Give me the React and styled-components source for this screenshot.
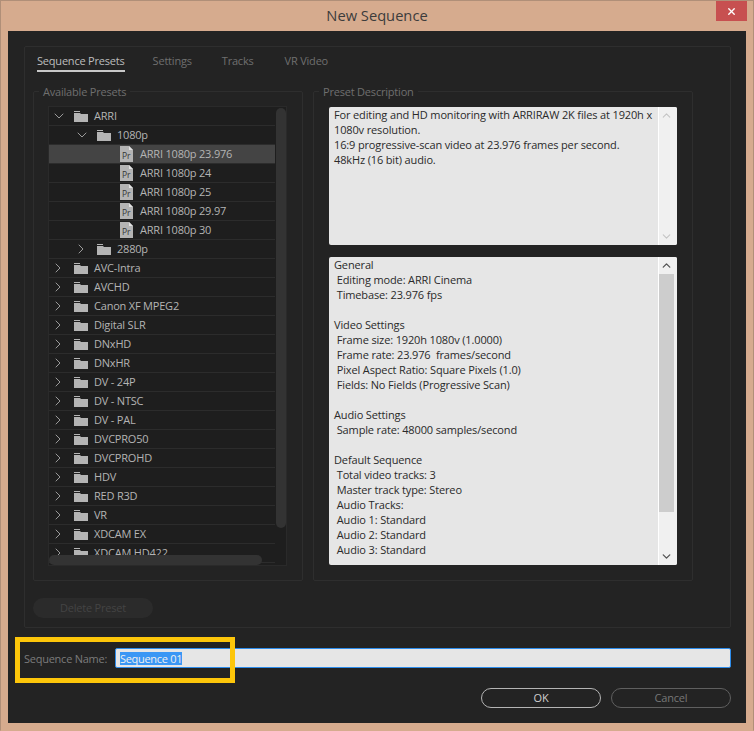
import React from 'react'
import styled, { createGlobalStyle } from 'styled-components'
import { ChevronDown, ChevronRight, ChevronUp, X } from 'lucide-react'

const GlobalStyle = createGlobalStyle`
    html, body {
        margin: 0;
        padding: 0;
        background: #d6ab8e;
    }
`

const uiFont = `"Open Sans", "Liberation Sans", sans-serif`

const presets = [
    { name: 'ARRI', level: 0, open: true },
    { name: '1080p', level: 1, open: true },
    { name: 'ARRI 1080p 23.976', level: 2, file: true, selected: true },
    { name: 'ARRI 1080p 24', level: 2, file: true },
    { name: 'ARRI 1080p 25', level: 2, file: true },
    { name: 'ARRI 1080p 29.97', level: 2, file: true },
    { name: 'ARRI 1080p 30', level: 2, file: true },
    { name: '2880p', level: 1 },
    { name: 'AVC-Intra', level: 0 },
    { name: 'AVCHD', level: 0 },
    { name: 'Canon XF MPEG2', level: 0 },
    { name: 'Digital SLR', level: 0 },
    { name: 'DNxHD', level: 0 },
    { name: 'DNxHR', level: 0 },
    { name: 'DV - 24P', level: 0 },
    { name: 'DV - NTSC', level: 0 },
    { name: 'DV - PAL', level: 0 },
    { name: 'DVCPRO50', level: 0 },
    { name: 'DVCPROHD', level: 0 },
    { name: 'HDV', level: 0 },
    { name: 'RED R3D', level: 0 },
    { name: 'VR', level: 0 },
    { name: 'XDCAM EX', level: 0 },
    { name: 'XDCAM HD422', level: 0 },
]

const generalLines = [
    'General',
    ' Editing mode: ARRI Cinema',
    ' Timebase: 23.976 fps',
    '',
    'Video Settings',
    ' Frame size: 1920h 1080v (1.0000)',
    ' Frame rate: 23.976  frames/second',
    ' Pixel Aspect Ratio: Square Pixels (1.0)',
    ' Fields: No Fields (Progressive Scan)',
    '',
    'Audio Settings',
    ' Sample rate: 48000 samples/second',
    '',
    'Default Sequence',
    ' Total video tracks: 3',
    ' Master track type: Stereo',
    ' Audio Tracks:',
    ' Audio 1: Standard',
    ' Audio 2: Standard',
    ' Audio 3: Standard',
]

const FolderIcon = () => (
    <svg width="14" height="11" viewBox="0 0 14 11">
        <path d="M0 0h6v1H0z" fill="#b4b4b4" />
        <path d="M0 2h6l1 1h7v8H0z" fill="#b4b4b4" />
    </svg>
)

const PrFileIcon = () => (
    <PrIcon>
        <svg width="13" height="16" viewBox="0 0 13 16">
            <path d="M0 0h9l4 4v12H0z" fill="#b4b4b4" />
            <path d="M9 0l4 4H9z" fill="#e2e2e2" />
        </svg>
        <PrMark>Pr</PrMark>
    </PrIcon>
)

export default function App() {
    return (
        <>
            <GlobalStyle />
            <Window>
                <TitleBar>
                    <Title>New Sequence</Title>
                    <CloseButton><X size={11} strokeWidth={3} color="#fff" /></CloseButton>
                </TitleBar>
                <Client>
                    <TabPanel>
                        <Tabs>
                            <Tab $active>Sequence Presets</Tab>
                            <Tab $left={28}>Settings</Tab>
                            <Tab $left={30}>Tracks</Tab>
                            <Tab $left={31}>VR Video</Tab>
                        </Tabs>
                        <Columns>
                            <Group $width={270}>
                                <Legend>Available Presets</Legend>
                                <Tree>
                                    {presets.map((p) => (
                                        <TreeRow key={p.name} $selected={p.selected}>
                                            <Indent $level={p.level}>
                                                <Twisty $open={p.open}>
                                                    {!p.file && (p.open
                                                        ? <ChevronDown size={16} strokeWidth={1.5} color="#9a9a9a" />
                                                        : <ChevronRight size={16} strokeWidth={1.5} color="#9a9a9a" />)}
                                                </Twisty>
                                                {p.file ? <PrFileIcon /> : <FolderIcon />}
                                                <RowLabel $file={p.file}>{p.name}</RowLabel>
                                            </Indent>
                                        </TreeRow>
                                    ))}
                                    <TreeThumbV />
                                    <TreeThumbH />
                                </Tree>
                            </Group>
                            <Group $width={380}>
                                <Legend>Preset Description</Legend>
                                <InfoBox $height={138}>
                                    <InfoText>
                                        For editing and HD monitoring with ARRIRAW 2K files at 1920h x<br />
                                        1080v resolution.<br />
                                        16:9 progressive-scan video at 23.976 frames per second.<br />
                                        48kHz (16 bit) audio.
                                    </InfoText>
                                    <InfoScroll>
                                        <ChevronUp size={13} strokeWidth={2} color="#c4c4c4" />
                                        <ChevronDown size={13} strokeWidth={2} color="#c4c4c4" />
                                    </InfoScroll>
                                </InfoBox>
                                <InfoBox $height={308} $gap={12}>
                                    <InfoText>
                                        {generalLines.map((line, i) => (
                                            <InfoLine key={i}>{line || '\u00a0'}</InfoLine>
                                        ))}
                                    </InfoText>
                                    <InfoScroll>
                                        <ChevronUp size={13} strokeWidth={2.5} color="#555" />
                                        <ScrollThumb />
                                        <ChevronDown size={13} strokeWidth={2.5} color="#555" />
                                    </InfoScroll>
                                </InfoBox>
                            </Group>
                        </Columns>
                        <DeleteButton>Delete Preset</DeleteButton>
                    </TabPanel>
                    <NameRow>
                        <NameLabel>Sequence Name:</NameLabel>
                        <NameInput><Selected>Sequence 01</Selected></NameInput>
                        <Highlight />
                    </NameRow>
                    <Actions>
                        <PillButton $primary>OK</PillButton>
                        <PillButton>Cancel</PillButton>
                    </Actions>
                </Client>
            </Window>
        </>
    )
}

const Window = styled.div`
    box-sizing: border-box;
    width: 754px;
    height: 731px;
    display: flex;
    flex-direction: column;
    background: #d6ab8e;
    border: 1px solid #b08f78;
    border-bottom-color: #d6ab8e;
    padding: 0 7px 7px;
    font-family: ${uiFont};
    letter-spacing: -0.2px;
    overflow: hidden;
`
const TitleBar = styled.div`
    position: relative;
    height: 30px;
    flex: none;
    display: flex;
    align-items: center;
    justify-content: center;
    padding-bottom: 2px;
    box-sizing: border-box;
`
const Title = styled.div`
    font-size: 14.7px;
    letter-spacing: 0;
    color: #3c3c3c;
`
const CloseButton = styled.div`
    position: absolute;
    top: 0;
    right: -1px;
    width: 31px;
    height: 20px;
    background: #c75050;
    display: flex;
    align-items: center;
    justify-content: center;
`
const Client = styled.div`
    flex: 1;
    background: #232323;
    padding: 15px 15px 15px 16px;
    display: flex;
    flex-direction: column;
`
const TabPanel = styled.div`
    box-sizing: border-box;
    height: 582px;
    flex: none;
    border: 1px solid #2e2e2e;
    border-radius: 2px;
    padding: 0 37px 0 8px;
`
const Tabs = styled.div`
    display: flex;
    height: 25px;
    padding-left: 4px;
    align-items: flex-start;
`
const Tab = styled.div`
    box-sizing: border-box;
    height: 25px;
    margin-left: ${({ $left }) => $left || 0}px;
    font-size: 11px;
    line-height: 28px;
    color: ${({ $active }) => ($active ? '#bdbdbd' : '#6f6f6f')};
    border-bottom: 2px solid ${({ $active }) => ($active ? '#c8c8c8' : 'transparent')};
`
const Columns = styled.div`
    display: flex;
    gap: 10px;
    margin-top: 19px;
`
const Group = styled.div`
    position: relative;
    box-sizing: border-box;
    width: ${({ $width }) => $width}px;
    height: 490px;
    border: 1px solid #2e2e2e;
    border-radius: 2px;
    padding: 15px 15px 14px 15px;
`
const Legend = styled.div`
    position: absolute;
    top: -8px;
    left: 5px;
    padding: 0 4px;
    background: #232323;
    font-size: 11px;
    line-height: 16px;
    color: #6f6f6f;
`
const Tree = styled.div`
    position: relative;
    box-sizing: border-box;
    height: 460px;
    margin: -1px 0 0 -1px;
    background: #1e1e1e;
    border: 1px solid #2a2a2a;
    overflow: hidden;
`
const TreeRow = styled.div`
    box-sizing: border-box;
    height: 19px;
    width: 226px;
    border-bottom: 1px solid #2c2c2c;
    background: ${({ $selected }) => ($selected ? '#444444' : 'transparent')};
`
const Indent = styled.div`
    display: flex;
    align-items: center;
    height: 18px;
    padding-left: ${({ $level }) => 3 + $level * 23}px;
`
const Twisty = styled.div`
    width: 22px;
    flex: none;
    display: flex;
    align-items: center;
    svg {
        margin-left: ${({ $open }) => ($open ? -1 : -2.5)}px;
    }
`
const RowLabel = styled.span`
    margin-left: ${({ $file }) => ($file ? 7 : 6)}px;
    margin-top: -2px;
    font-size: 11px;
    color: #b4b4b4;
    white-space: nowrap;
`
const PrIcon = styled.span`
    position: relative;
    width: 13px;
    height: 16px;
    flex: none;
    display: block;
    svg {
        display: block;
    }
`
const PrMark = styled.span`
    position: absolute;
    left: 2px;
    top: 3px;
    font-size: 8.5px;
    line-height: 13px;
    letter-spacing: 0;
    color: #333;
`
const TreeThumbV = styled.div`
    position: absolute;
    top: 1px;
    right: 0;
    width: 10px;
    height: 420px;
    border-radius: 5px;
    background: #333333;
`
const TreeThumbH = styled.div`
    position: absolute;
    left: 0;
    bottom: 0;
    width: 213px;
    height: 10px;
    border-radius: 5px;
    background: #333333;
`
const InfoBox = styled.div`
    box-sizing: border-box;
    height: ${({ $height }) => $height}px;
    margin-top: ${({ $gap }) => $gap || 0}px;
    display: flex;
    background: #e6e6e6;
    border-radius: 2px;
    overflow: hidden;
`
const InfoText = styled.div`
    flex: 1;
    min-width: 0;
    padding: 0 0 0 5px;
    font-size: 11px;
    letter-spacing: -0.14px;
    line-height: 15px;
    color: #2a2a2a;
    white-space: nowrap;
`
const InfoLine = styled.div`
    white-space: pre;
`
const InfoScroll = styled.div`
    width: 15px;
    flex: none;
    box-sizing: content-box;
    background: #f0f0f0;
    border-left: 1px solid #fff;
    display: flex;
    flex-direction: column;
    align-items: center;
    justify-content: space-between;
    padding: 2px 3px 2px 0;
`
const ScrollThumb = styled.div`
    height: 238px;
    align-self: stretch;
    margin: 2px 0 auto;
    background: #cdcdcd;
`
const DeleteButton = styled.div`
    width: 120px;
    height: 20px;
    margin-top: 17px;
    border-radius: 10px;
    background: #2b2b2b;
    color: #444444;
    font-size: 11px;
    line-height: 20px;
    text-align: center;
`
const NameRow = styled.div`
    position: relative;
    display: flex;
    align-items: center;
    height: 20px;
    margin-top: 20px;
`
const NameLabel = styled.div`
    width: 91px;
    flex: none;
    font-size: 11px;
    letter-spacing: -0.25px;
    color: #7b7b7b;
`
const NameInput = styled.div`
    box-sizing: border-box;
    flex: 1;
    height: 20px;
    background: #e6e6e6;
    border: 1px solid #2d8ceb;
    border-radius: 2px;
    padding-left: 4px;
    display: flex;
    align-items: center;
    font-size: 11px;
    color: #222;
`
const Selected = styled.span`
    background: #3a97f5;
    color: #f0f0f0;
    line-height: 13px;
    letter-spacing: -0.3px;
`
const Highlight = styled.div`
    position: absolute;
    left: -9px;
    top: -11px;
    width: 220px;
    height: 46px;
    box-sizing: border-box;
    border: 5px solid #fdc60a;
    pointer-events: none;
`
const Actions = styled.div`
    display: flex;
    justify-content: flex-end;
    gap: 10px;
    margin-top: 20px;
`
const PillButton = styled.div`
    box-sizing: border-box;
    width: 120px;
    height: 20px;
    border-radius: 10px;
    border: 1px solid ${({ $primary }) => ($primary ? '#b4b4b4' : '#5f5f5f')};
    color: ${({ $primary }) => ($primary ? '#cfcfcf' : '#777777')};
    font-size: 11px;
    line-height: 18px;
    text-align: center;
`
